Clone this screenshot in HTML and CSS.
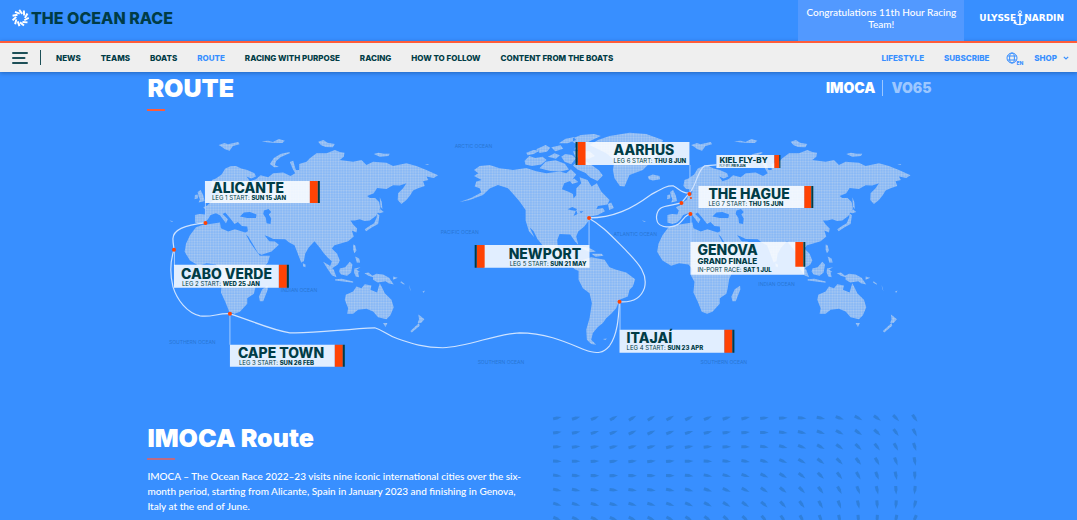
FILE: index.html
```html
<!DOCTYPE html>
<html lang="en">
<head>
<meta charset="utf-8">
<title>Route | The Ocean Race</title>
<link rel="stylesheet" href="styles.css">
</head>
<body>
<header class="site-header">
  <div class="brand-bar">
    <a class="brand" href="#">
      <svg class="brand-mark" viewBox="-10 -10 20 20" aria-hidden="true">
        <g stroke="#fff" stroke-width="2.3" stroke-linecap="butt">
          <path id="ray" d="M2-4.800L-1.500-9.600"/>
          <use href="#ray" transform="rotate(33)"/><use href="#ray" transform="rotate(66)"/>
          <use href="#ray" transform="rotate(98)"/><use href="#ray" transform="rotate(131)"/>
          <use href="#ray" transform="rotate(164)"/><use href="#ray" transform="rotate(196)"/>
          <use href="#ray" transform="rotate(229)"/><use href="#ray" transform="rotate(262)"/>
          <use href="#ray" transform="rotate(295)"/><use href="#ray" transform="rotate(327)"/>
        </g>
      </svg>
      <span>THE OCEAN RACE</span>
    </a>
    <p class="announcement">Congratulations 11th Hour Racing Team!</p>
    <a class="sponsor" href="#"><span>ULYSSE</span><svg class="anchor" viewBox="0 0 14 18" aria-hidden="true"><g fill="none" stroke="#fff"><circle cx="7" cy="2.5" r="1.6"/><path d="M7 4v12M4.500 5.500h5" stroke-width="1.600"/><path d="M1 12.500c1 4 11 4 12 0M.5 14.500l.8-2.500 2 1.500M13.500 14.500l-.8-2.500-2 1.500" stroke-width="1.200"/></g></svg><span>NARDIN</span></a>
  </div>
  <nav class="main-nav" aria-label="Main">
    <button class="menu-button" aria-label="Menu"><svg viewBox="0 0 16 12"><path d="M1 1h14M1 6h11.500M1 11h14" stroke="#1d5058" stroke-width="2" stroke-linecap="round"/></svg></button>
    <div class="links primary">
      <a href="#">NEWS</a><a href="#">TEAMS</a><a href="#">BOATS</a><a class="active" href="#">ROUTE</a><a href="#">RACING WITH PURPOSE</a><a href="#">RACING</a><a href="#">HOW TO FOLLOW</a><a href="#">CONTENT FROM THE BOATS</a>
    </div>
    <div class="links secondary">
      <a href="#">LIFESTYLE</a><a href="#">SUBSCRIBE</a>
      <button class="language"><svg viewBox="0 0 12 12" aria-hidden="true"><g fill="none" stroke="#388fff"><circle cx="6" cy="6" r="5"/><ellipse cx="6" cy="6" rx="2.400" ry="5"/><path d="M1.500 4h9M1.500 8h9"/></g></svg><span>EN</span></button>
      <a class="shop" href="#">SHOP<svg viewBox="0 0 6 4" aria-hidden="true"><path d="M.8.8L3 3 5.200.8" fill="none" stroke="#388fff" stroke-width="1.200"/></svg></a>
    </div>
  </nav>
</header>
<main class="page">
  <div class="title-row">
    <h1>ROUTE</h1>
    <div class="classes"><a class="selected" href="#">IMOCA</a><a href="#">VO65</a></div>
  </div>
  <svg class="map" viewBox="147 125 785 255" role="img" aria-label="Race route map">
    <defs>
      <pattern id="dots" width="8" height="8" patternUnits="userSpaceOnUse"><rect width="8" height="8" fill="#7fb4f8"/><rect x="1" y="1" width="6" height="6" rx="2" fill="#abcaf1"/></pattern>
      <g id="oldworld" fill="url(#dots)" fill-rule="evenodd">
        <path d="M165 285L179 282 195 284 199 272 190 262 202 257 212 247 224 239 226 225 236 225 240 214 234 208 221 207 213 198 216 180 228 176 245 164 256 146 272 139 288 138 304 146 322 150 344 160 348 170 334 176 320 170 330 184 348 178 362 166 385 172 400 160 430 158 452 168 466 160 458 146 450 126 460 122 468 150 478 150 478 132 500 125 510 115 530 100 560 100 585 90 600 96 614 98 612 110 600 120 640 125 665 120 680 135 700 125 740 128 760 138 800 130 830 138 860 150 895 166 882 174 860 170 866 180 850 184 855 198 835 205 820 212 812 225 800 240 785 252 774 240 775 220 790 205 800 190 780 197 760 196 740 207 712 204 702 220 682 228 690 234 706 234 718 246 722 265 708 288 690 302 674 303 660 298 645 302 632 302 640 314 652 326 650 338 636 332 642 350 625 364 600 372 584 376 576 386 592 402 600 422 594 434 576 446 570 442 576 424 564 414 552 400 540 384 524 364 506 384 496 402 492 424 484 428 474 402 464 376 448 368 436 358 400 357 385 350 374 346 388 364 405 365 417 375 395 395 365 405 355 400 340 375 325 350 318 344 330 366 346 390 360 408 390 408 384 428 362 452 350 478 346 505 342 522 322 535 322 552 300 576 284 582 268 576 256 546 243 518 246 486 236 468 240 448 228 434 200 430 176 438 150 422 134 396 138 372 150 346 168 322 185 316 240 308 243 325 265 335 285 328 316 338 324 334 322 320 306 318 294 306 284 312 270 294 256 278 248 282 264 298 258 310 240 286 228 280 212 285 204 298 194 308 180 312 165 308zM300 290L312 278 330 276 350 284 348 294 322 294zM372 272L386 267 394 276 387 284 394 296 392 312 380 310 378 294 370 282z"/>
        <path d="M176 248l18-5-4-16-8-17-9 6 3 14 4 8zM164 238l10-3-1-11-8 1zM236 75l18-6 10 4 31-7 4 7-20 5-10 14-14-4-10-8zM365 64l20-2 14 4 18-9 18 5-8 7-26-1-20-1zM535 65l16-5 12 8 22 4-6 10-22-1-14-6zM390 132l12-18 20-12 26-6 3 3-28 12-14 12-4 12 12 6-14 1zM702 102l14-4 16 3 18 0-4 7-26 2zM855 134l10-2 2 3zM675 328l14-10 14-8 8-18 0-12 8 6-4 26-18 10-18 12zM710 276l12-8 10 8-12 4zM720 232l6 14 2 22-6-8zM640 374l6 2 4 16-6 8-4-10zM646 410l12 6 3 12-10 0zM489 430l8 4 0 8-7-2zM550 426l18 10 14 14 8 22-14-6-16-24zM586 478l20-1 34 8 0 4-28-4-26-3zM600 446l16-4 14-16 8 8-4 24-12 10-18-4-6-8zM644 446l18-4-12 8 10 6-5 2 3 14-10-2-5-12zM674 460l12-2 12 10 12-6 20 2 18 10 14 20-16-4-8-6-24 4-14-8 0-8-14-4zM760 470l14 4-14 6zM784 484l10 8 0 3-12-7zM615 540L618 525 640 515 650 500 665 505 675 493 695 497 692 510 712 518 720 490 728 505 735 520 755 540 762 562 752 586 740 598 715 592 700 575 680 567 655 570 640 582 622 582 625 565zM730 610l13 0-6 12zM836 584l8 6 10 8-10 12-10 0 4-12zM838 610l-26 24 4 4 24-20zM361 522l6-14 16-10 1 10-14 36-10 0-3-14zM808 494l2 12 4 10zM848 516l8-4-4 7zM88 302l12 2-4 2z"/>
      </g>
    </defs>
    <use href="#oldworld" transform="translate(140 120) scale(.33333)"/>
    <use href="#oldworld" transform="translate(613 120) scale(.33333)"/>
    <g transform="translate(430 120) scale(.33333)" fill="url(#dots)" fill-rule="evenodd">
      <path d="M133 150L150 138 180 135 210 145 250 150 290 144 320 154 350 160 390 155 410 160 424 148 440 164 426 182 404 190 397 208 415 215 430 222 432 236 440 226 440 206 455 190 450 172 474 180 486 200 502 190 515 215 540 240 534 254 505 258 500 268 520 264 526 274 505 285 482 290 478 302 464 320 446 335 440 350 446 375 436 364 422 344 390 342 383 360 385 386 400 396 420 386 416 404 432 420 438 440 456 446 452 454 438 450 420 434 392 416 368 404 345 384 324 358 312 334 300 322 314 352 298 334 288 302 288 270 270 245 252 224 235 205 205 195 180 206 160 225 120 240 90 246 124 234 155 218 150 205 135 200 140 185 156 180 133 168 146 160zM414 268l14-7 14 6-2 6-14-2zM432 288l8-18 4 12zM450 274l12 0-8 6z"/>
      <path d="M285 122l14-14 18 6 22-4 12 10-16 14-28 4-20-4zM330 145l18-20 30-4 28 10 12 18-24 6-32-2zM290 98l22-8 18 2-18 10-18 4zM320 88l28-13 14 8-10 12-22 4zM365 82l28-6 8 10-24 8zM388 70l20-14 24-4 8 8-26 10zM355 110l20-10 16 6-12 10zM395 110l12-8 20 3 12 10-14 18-20-8zM430 55l24-10 40-3 20 6-26 12-20 10-14 22-20-4 10-14-14-8zM430 94l50 0 16 14-18 8-40-4zM440 128l26-5 20 12 22 16 12 16-16 16-22-10-14-14-24-10-14-12zM420 182l14-6 12 10-18 6zM535 252l10-4 8 16-14 6z"/>
      <path d="M505 60l35-12 60-10 50 4 50 18-10 40-30 30-20 20-40 15-15 35-14-2-16-23-5-25 5-30-25-20-30-15-20-10zM655 170l15-6 20 4 2 10-22 4-12-4zM447 380l30 3 22 12-16 2-20-8zM486 402l30 0 6 6-24 3zM530 430l4 14-6 0z"/>
      <path d="M447 440L460 420 485 412 525 420 540 442 560 450 590 458 617 478 610 500 600 510 595 530 570 540 560 565 545 582 530 595 520 610 505 622 490 640 485 660 500 675 485 673 472 660 470 630 480 595 487 550 480 520 460 505 447 480zM520 658l12-2-4 5z"/>
    </g>
    <g class="ocean-label">
      <text x="455" y="148">ARCTIC OCEAN</text><text x="441" y="234">PACIFIC OCEAN</text><text x="614" y="236">ATLANTIC OCEAN</text><text x="281" y="292">INDIAN OCEAN</text><text x="759" y="286">INDIAN OCEAN</text><text x="169" y="344">SOUTHERN OCEAN</text><text x="478" y="364">SOUTHERN OCEAN</text><text x="701" y="364">SOUTHERN OCEAN</text>
    </g>
    <g class="course">
      <path d="M205 223C185 225 172 230 173 240C173 244 174 247 174 250C170 262 170 275 173 287C177 300 187 313 200 316C211 318 219 313 230 314C250 320 270 330 290 333C315 334 345 329 375 328C385 331 388 336 398 339C412 344 425 348 443 348C470 347 495 334 520 333C547 333 568 343 585 350C598 355 604 353 610 346C618 335 619 318 620 302C634 303 642 297 645 288C649 272 636 261 626 250C612 236 602 225 589 218C614 218 632 209 651 195C662 189 668 185 674 186C680 189 683 194 690 193L682 203C668 207 658 204 657 217C657 225 662 227 670 227C684 226 682 216 691 214"/>
      <path d="M691 192C698 182 698 171 705 166L717 165"/>
    </g>
    <path class="leader" d="M205.500 203v20M174.500 250v16M230 314v31M589.500 218v27M620.500 302v28M690.500 165v28M691.500 214v28"/>
    <g class="port"><circle cx="205.500" cy="223" r="2"/><circle cx="174" cy="250" r="2"/><circle cx="230" cy="314" r="2"/><circle cx="589.500" cy="218" r="2"/><circle cx="620" cy="302" r="2"/><circle cx="690" cy="194" r="2"/><circle cx="682" cy="203" r="2"/><circle cx="691" cy="214" r="2"/><circle cx="691.500" cy="198" r="1"/></g>
    <path class="plate" d="M205 181h105v22H205zM174 265h105v23H174zM230 345h105v22H230zM484 245h106v23H484zM585 142h105v23H585zM717 155h58v13h-58zM699 186h106v22H699zM691 242h114v33H691zM620 330h105v23H620z"/>
    <path class="plate-accent" d="M310 181h8v22h-8zM279 265h8v23h-8zM335 345h8v22h-8zM477 245h8v23h-8zM578 142h8v23h-8zM775 155h5v13h-5zM805 186h7v22h-7zM796 242h8v25h-8zM725 330h8v23h-8z"/>
    <path class="plate-edge" d="M318 181h2v22h-2zM287 265h2v23h-2zM343 345h2v22h-2zM475 245h2v23h-2zM576 142h2v23h-2zM780 155h1v13h-1zM812 186h2v22h-2zM804 242h2v25h-2zM733 330h2v23h-2z"/>
    <g class="port-name">
      <text x="212" y="193">ALICANTE</text><text x="181" y="279">CABO VERDE</text><text x="238" y="358">CAPE TOWN</text><text x="509" y="259">NEWPORT</text><text x="614" y="155">AARHUS</text><text x="709" y="199">THE HAGUE</text><text x="698" y="255">GENOVA</text><text x="627" y="343">ITAJAÍ</text>
      <text class="finale" x="698" y="264">GRAND FINALE</text><text class="flyby" x="720" y="163">KIEL FLY-BY</text>
    </g>
    <g class="port-date">
      <text x="212" y="200">LEG 1 START: <tspan>SUN 15 JAN</tspan></text><text x="182" y="286">LEG 2 START: <tspan>WED 25 JAN</tspan></text><text x="239" y="365">LEG 3 START: <tspan>SUN 26 FEB</tspan></text><text x="510" y="266">LEG 5 START: <tspan>SUN 21 MAY</tspan></text><text x="614" y="163">LEG 6 START: <tspan>THU 8 JUN</tspan></text><text x="709" y="206">LEG 7 START: <tspan>THU 15 JUN</tspan></text><text x="698" y="272">IN-PORT RACE: <tspan>SAT 1 JUL</tspan></text><text x="627" y="350">LEG 4 START: <tspan>SUN 23 APR</tspan></text>
      <text class="tiny" x="720" y="167">FLY-BY: <tspan>FRI 9 JUN</tspan></text>
    </g>
  </svg>
  <section class="intro">
    <div class="intro-copy">
      <h2>IMOCA Route</h2>
      <p>IMOCA – The Ocean Race 2022–23 visits nine iconic international cities over the six-month period, starting from Alicante, Spain in January 2023 and finishing in Genova, Italy at the end of June.</p>
    </div>
    <svg class="wind" viewBox="0 0 366 106" aria-hidden="true"><defs><path id="gust" d="M-4-1.500L0-1.500 4.500 0 0 1.500-4 1.500z"/></defs></svg>
  </section>
</main>
<script src="wind.js"></script>
</body>
</html>
```

FILE: styles.css
```css
* { box-sizing: border-box; }
body { margin: 0; background: #388fff; color: #fff; font-family: Lato, "Liberation Sans", sans-serif; }
a { color: inherit; text-decoration: none; }
button { border: 0; padding: 0; background: none; color: inherit; font: inherit; cursor: pointer; }
svg { display: block; }

.site-header { position: sticky; top: 0; z-index: 2; background: #388fff; }
.brand-bar { display: flex; align-items: stretch; height: 41px; padding: 0 13px 0 12px; }
.brand { display: flex; align-items: center; gap: 2px; margin: 0 auto 6px 0; color: #003c46; font: 800 16px/20px Inter, sans-serif; }
.brand-mark { width: 17px; height: 20px; }
.announcement { width: 166px; margin: 0 15px 0 0; padding: 6px 4px 0; background: #5299ff; font: 500 10px/12px Lato, sans-serif; text-align: center; }
.sponsor { display: flex; align-items: center; margin-bottom: 5px; font: 700 9px/12px "DejaVu Sans", sans-serif; }
.anchor { width: 14px; height: 17px; margin: 0 -3px; }

.main-nav { display: flex; align-items: center; height: 31px; padding: 0 8px 0 12px; border-top: 2px solid #ff5c39; background: #efefef; box-shadow: 0 1px 4px rgba(0, 40, 90, .4); color: #003c46; font: 800 8px/12px Inter, sans-serif; }
.menu-button { display: flex; align-items: center; height: 15px; padding-right: 12px; border-right: 1px solid #1d5058; }
.menu-button svg { width: 16px; height: 12px; }
.links { display: flex; align-items: center; gap: 20px; white-space: nowrap; }
.primary { margin-left: 15px; }
.secondary { margin-left: auto; color: #388fff; }
.active { color: #388fff; }
.language { display: flex; align-items: flex-end; margin: 0 -9px 0 -3px; }
.language svg { width: 12px; height: 12px; }
.language span { margin: 0 0 -2px -2px; font-size: 5px; line-height: 6px; }
.shop { display: flex; align-items: center; gap: 6px; }
.shop svg { width: 6px; height: 4px; }

.page { width: 73%; margin: 0 auto; padding-left: 2px; }
.title-row { display: flex; justify-content: space-between; align-items: flex-start; padding-top: 1px; }
h1, h2 { margin: 0; font: 900 25px/30px Inter, sans-serif; }
h1::after, h2::after { content: ""; display: block; height: 2px; background: #ff5c39; }
h1::after { width: 18px; margin-top: 6px; }
h2::after { width: 28px; margin-top: 5px; background: #bd6b85; }
.classes { display: flex; margin-top: 7px; font: 900 14px/16px Inter, sans-serif; }
.classes a { padding-left: 8px; color: #9cc7ff; }
.classes .selected { padding: 0 7px 0 0; border-right: 1px solid #9cc7ff; color: #fff; }

.map { width: 100%; height: auto; margin-top: 14px; font-family: Inter, sans-serif; }
.ocean-label { fill: #2876d4; font-size: 5px; }
.course { fill: none; stroke: #cfe3ff; stroke-width: 1.2; }
.leader { fill: none; stroke: #a5ccff; stroke-width: 1; }
.port { fill: #ff4304; }
.plate { fill: #fff; fill-opacity: .85; }
.plate-accent { fill: #ff4304; }
.plate-edge, .port-name, .port-date { fill: #003c46; }
.port-name { font-size: 14px; font-weight: 800; }
.port-name .finale { font-size: 8px; }
.port-name .flyby { font-size: 8px; }
.port-date { font-size: 6px; }
.port-date tspan { font-weight: 800; }
.port-date .tiny { font-size: 3px; }

.intro { display: flex; justify-content: space-between; margin-top: 34px; }
.intro-copy { width: 49%; padding-top: 9px; }
.intro p { margin: 9px 0 0; font: 500 10px/15px Lato, sans-serif; }
.wind { width: 47%; height: auto; margin-right: 11px; fill: #2f7fdb; align-self: flex-start; }
```

FILE: wind.js
```js
const wind = document.querySelector(".wind");
const headings = [-12, -18, -24, -30, -32, -32, -30, -26, -22, -18, -14, -8, -2, 5, 12, 20, 28, 36, 45, 55];
for (let row = 0; row < 8; row++) {
  headings.forEach((heading, col) => {
    const gust = document.createElementNS("http://www.w3.org/2000/svg", "use");
    const angle = heading + row * (5 + Math.min(col, 4) * 0.8);
    gust.setAttribute("href", "#gust");
    gust.setAttribute("transform", `translate(${5 + col * 18.7} ${4 + row * 14.3}) rotate(${angle})`);
    wind.append(gust);
  });
}
```
